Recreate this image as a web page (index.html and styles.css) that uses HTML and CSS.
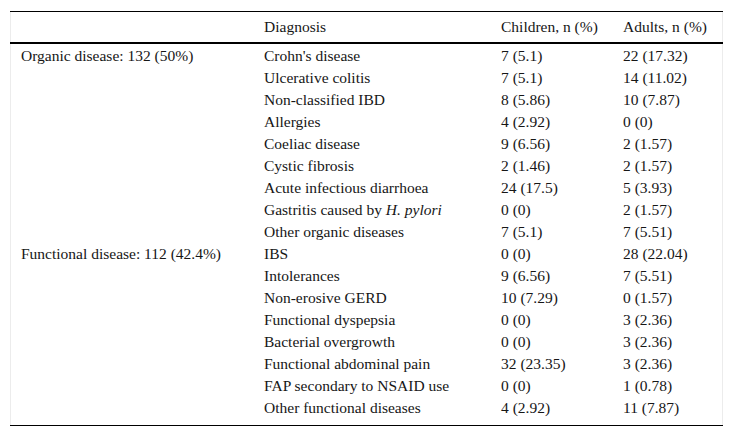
FILE: index.html
```html
<!DOCTYPE html>
<html lang="en">
<head>
<meta charset="utf-8">
<title>Table</title>
<link rel="stylesheet" href="styles.css">
</head>
<body>
<div class="wrap">
<table class="data">
<colgroup>
<col class="c1"><col class="c2"><col class="c3"><col class="c4">
</colgroup>
<thead>
<tr><th></th><th>Diagnosis</th><th>Children, n (%)</th><th>Adults, n (%)</th></tr>
</thead>
<tbody>
<tr><td>Organic disease: 132 (50%)</td><td>Crohn's disease</td><td>7 (5.1)</td><td>22 (17.32)</td></tr>
<tr><td></td><td>Ulcerative colitis</td><td>7 (5.1)</td><td>14 (11.02)</td></tr>
<tr><td></td><td>Non-classified IBD</td><td>8 (5.86)</td><td>10 (7.87)</td></tr>
<tr><td></td><td>Allergies</td><td>4 (2.92)</td><td>0 (0)</td></tr>
<tr><td></td><td>Coeliac disease</td><td>9 (6.56)</td><td>2 (1.57)</td></tr>
<tr><td></td><td>Cystic fibrosis</td><td>2 (1.46)</td><td>2 (1.57)</td></tr>
<tr><td></td><td>Acute infectious diarrhoea</td><td>24 (17.5)</td><td>5 (3.93)</td></tr>
<tr><td></td><td>Gastritis caused by <i>H. pylori</i></td><td>0 (0)</td><td>2 (1.57)</td></tr>
<tr><td></td><td>Other organic diseases</td><td>7 (5.1)</td><td>7 (5.51)</td></tr>
<tr><td>Functional disease: 112 (42.4%)</td><td>IBS</td><td>0 (0)</td><td>28 (22.04)</td></tr>
<tr><td></td><td>Intolerances</td><td>9 (6.56)</td><td>7 (5.51)</td></tr>
<tr><td></td><td>Non-erosive GERD</td><td>10 (7.29)</td><td>0 (1.57)</td></tr>
<tr><td></td><td>Functional dyspepsia</td><td>0 (0)</td><td>3 (2.36)</td></tr>
<tr><td></td><td>Bacterial overgrowth</td><td>0 (0)</td><td>3 (2.36)</td></tr>
<tr><td></td><td>Functional abdominal pain</td><td>32 (23.35)</td><td>3 (2.36)</td></tr>
<tr><td></td><td>FAP secondary to NSAID use</td><td>0 (0)</td><td>1 (0.78)</td></tr>
<tr><td></td><td>Other functional diseases</td><td>4 (2.92)</td><td>11 (7.87)</td></tr>
</tbody>
</table>
</div>
</body>
</html>
```
FILE: styles.css
```css
html, body {
  margin: 0;
  padding: 0;
  background: #ffffff;
}
body {
  font-family: "Liberation Serif", "Times New Roman", serif;
  font-size: 15.5px;
  color: #161616;
}
.wrap {
  margin: 11px 0 0 10px;
  width: 713px;
  border-left: 1px solid #ececec;
  border-right: 1px solid #ececec;
  box-sizing: border-box;
}
.data {
  width: 713px;
  margin-left: -1px;
  border-collapse: collapse;
  table-layout: fixed;
  border-top: 1px solid #000;
  border-bottom: 1px solid #000;
  line-height: 18px;
}
.c1 { width: 243px; }
.c2 { width: 237px; }
.c3 { width: 122px; }
.c4 { width: 111px; }
.data th {
  font-weight: normal;
  text-align: left;
  height: 30px;
  padding: 0 0 0 11px;
  border-bottom: 2px solid #000;
  white-space: nowrap;
}
.data td {
  height: 19px;
  padding: 3px 0 0 11px;
  white-space: nowrap;
  vertical-align: top;
}
.data tbody tr:last-child td {
  height: 26px;
}
```
